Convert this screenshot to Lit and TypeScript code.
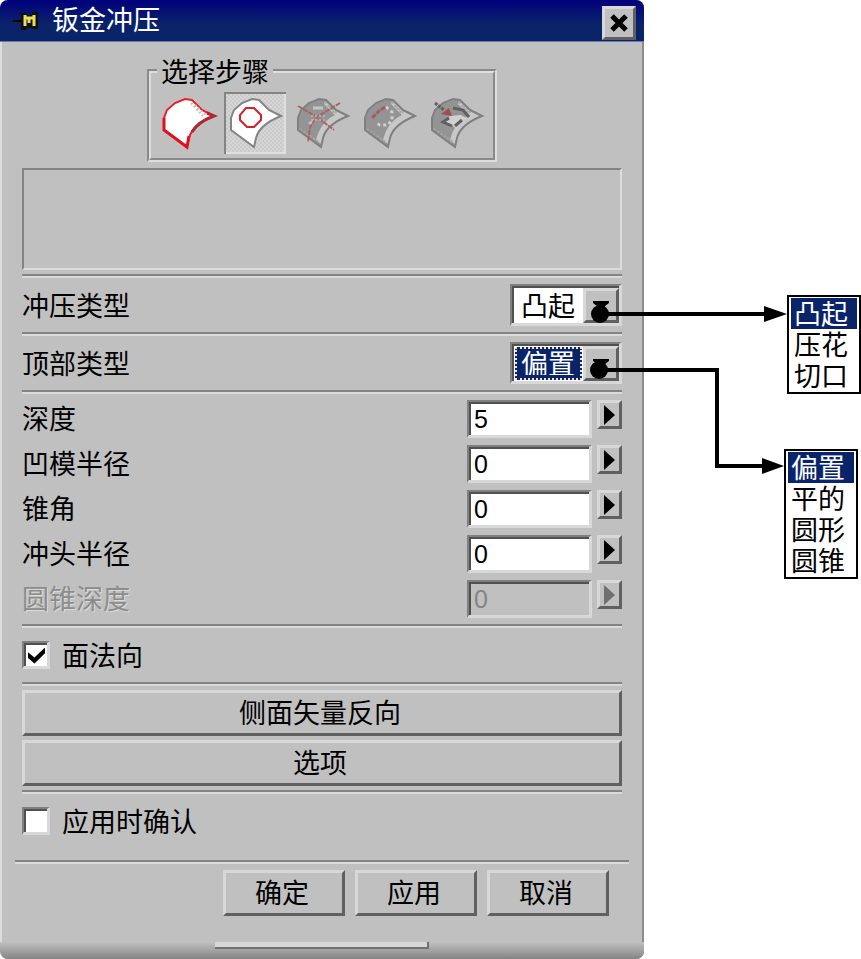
import { LitElement, html, css, svg, nothing } from "lit";
import { customElement } from "lit/decorators.js";
import { classMap } from "lit/directives/class-map.js";

const SHEET = "M7 26V38L30 55L32 46C34 38 42 30 57 24L45 18L35 8L28 7L18 11L10 18Z";

const disabledSheet = svg`
  <path d=${SHEET} fill="#949494"/>
  <path d="M34 9L45 19L55 24C42 29 33 38 30 52L25 48C28 36 34 28 44 23L33 12Z" fill="#c8c8c8"/>
  <path d="M34 10L44 22M38 14L47 22M9 37L28 50" stroke="#a8a8a8" stroke-width="2" stroke-dasharray="2 2" fill="none"/>
  <path d=${SHEET} fill="none" stroke="#808080" stroke-width="2"/>`;

const STEPS = [
  {
    label: "选择面",
    state: "ready",
    art: svg`
      <path d=${SHEET} fill="#fff" stroke="#e8202a" stroke-width="2"/>
      <path d="M34 11L46 24M38 13L49 23" stroke="#c4c0bc" stroke-width="2" stroke-dasharray="2 2"/>
      <path d="M7 26V38L30 55L32 44" fill="none" stroke="#e01020" stroke-width="3"/>
      <path d="M35 40C39 33 46 28 57 24L50 21" fill="none" stroke="#b02830" stroke-width="3"/>`,
  },
  {
    label: "选择曲线",
    state: "current",
    art: svg`
      <path d=${SHEET} fill="#fff" stroke="#848484" stroke-width="2"/>
      <path d="M22 16H30L37 23V28L30 35H23L16 28V23Z" fill="#fff" stroke="#d8202c" stroke-width="2"/>`,
  },
  {
    label: "第三步",
    state: "off",
    art: svg`${disabledSheet}
      <path d="M22 16H32M18 32L24 28" stroke="#c4c4c4" stroke-width="3"/>
      <path d="M7 14L26 25L43 38M49 11L26 25L19 35L17 50" fill="none" stroke="#a46468" stroke-width="2" stroke-dasharray="5 1"/>
      <path d="M20 24H34M20 28H34" stroke="#c0a8a8" stroke-width="2" stroke-dasharray="2 2"/>`,
  },
  {
    label: "第四步",
    state: "off",
    art: svg`${disabledSheet}
      <path d="M28 15L34 20V28L30 33H22L18 31" fill="none" stroke="#d0d0d0" stroke-width="3" stroke-dasharray="3 3"/>
      <path d="M27 15L21 19L14 26" fill="none" stroke="#a45c60" stroke-width="3" stroke-dasharray="5 1"/>`,
  },
  {
    label: "第五步",
    state: "off",
    art: svg`${disabledSheet}
      <path d="M19 30L25 24L36 23L41 26L36 32L31 37L26 32Z" fill="#d0d0d0"/>
      <path d="M28 16L38 18L44 25M24 26L18 30L27 34M30 34L37 28" fill="none" stroke="#606060" stroke-width="3"/>
      <path d="M10 11L19 18" stroke="#606060" stroke-width="3" stroke-dasharray="3 1"/>
      <path d="M16 22L27 24L24 16Z" fill="#a04c50"/>`,
  },
];

const PUNCH_TYPES = ["凸起", "压花", "切口"];
const TOP_TYPES = ["偏置", "平的", "圆形", "圆锥"];

const FIELDS = [
  { id: "depth", label: "深度", value: "5", disabled: false },
  { id: "die-radius", label: "凹模半径", value: "0", disabled: false },
  { id: "taper", label: "锥角", value: "0", disabled: false },
  { id: "punch-radius", label: "冲头半径", value: "0", disabled: false },
  { id: "cone-depth", label: "圆锥深度", value: "0", disabled: true },
];

@customElement("app-root")
export class AppRoot extends LitElement {
  static styles = css`
    :host {
      display: block;
      background: #fff;
      color: #000;
      font: 27px/28px "Noto Sans CJK SC", sans-serif;
    }
    * { box-sizing: border-box; }
    button, select, input { font: inherit; color: inherit; margin: 0; border-radius: 0; }
    svg { display: block; }

    .page {
      display: grid;
      grid-template-columns: minmax(0, 644fr) minmax(0, 217fr);
      align-items: start;
    }
    .dialog {
      background: #c0c0c0;
      border-radius: 8px;
      overflow: hidden;
      box-shadow: inset 2px 0 #dcdcdc, inset -2px 0 #8c8c8c;
    }
    .titlebar {
      display: flex;
      align-items: center;
      height: 42px;
      padding: 0 8px 0 12px;
      background: linear-gradient(#00007b, #0a246a 60%);
      border-bottom: 1px solid #6878a8;
      color: #fff;
    }
    .title { flex: 1; margin: 0 0 3px 12px; font-size: 27px; font-weight: 400; }
    .close { width: 34px; height: 34px; padding: 0; display: grid; place-items: center; margin-top: 4px; }
    .raised {
      background: #c0c0c0;
      border: 3px solid;
      border-color: #d8d8d8 #606060 #606060 #d8d8d8;
    }
    .sunken {
      border: solid;
      border-width: 2px 3px 3px 2px;
      border-color: #808080 #d8d8d8 #d8d8d8 #808080;
      box-shadow: inset 2px 2px #505050;
    }
    .body { padding: 15px 22px 0; }
    .steps {
      width: fit-content;
      margin: 0 auto;
      padding: 7px 6px 4px;
      border: 4px groove #dedede;
      min-width: 0;
    }
    .steps legend { padding: 0 4px; }
    .step-list { display: flex; gap: 5px; }
    .step { width: 62px; height: 62px; padding: 0; border: 0; background: none; }
    .step.current {
      background: repeating-conic-gradient(#cacaca 0 25%, #d6d6d6 0 50%) 0 0 / 4px 4px;
      box-shadow: inset 2px 2px #848484, inset -2px -2px #e0e0e0;
    }
    .message {
      height: 102px;
      margin: 6px 0 4px;
      border: 2px solid;
      border-color: #848484 #dcdcdc #dcdcdc #848484;
    }
    .rule {
      height: 4px;
      margin: 0;
      border: 0;
      border-top: 2px solid #848484;
      border-bottom: 2px solid #dadada;
    }
    .rule.wide { margin: 0 -7px; }
    .row { display: flex; align-items: center; justify-content: space-between; height: 54px; }
    .combo { display: flex; width: 112px; height: 42px; padding: 2px 0 0 2px; background: #fff; }
    .combo select {
      flex: 1;
      min-width: 0;
      appearance: none;
      border: 0;
      outline: 0;
      background: #fff;
      padding: 0 0 2px 7px;
    }
    .combo.active select {
      margin: 1px;
      padding: 0 0 3px 4px;
      border: 2px dotted #f0e8c4;
      background: #0a246a;
      color: #fff;
    }
    .drop { width: 36px; display: grid; place-items: center; }
    .fields { display: grid; gap: 7px; padding: 6px 0; }
    .field { display: flex; gap: 5px; height: 38px; align-items: flex-start; }
    .field label { flex: 1; line-height: 36px; }
    .field input {
      width: 125px;
      height: 38px;
      padding: 2px 5px 0;
      background: #fff;
      font: 25px/28px "Liberation Sans", sans-serif;
    }
    .field.off label { color: #8c8c8c; text-shadow: 1px 1px #dcdcdc; }
    .field.off input { background: #c0c0c0; color: #848484; }
    .more { width: 25px; height: 29px; padding: 0; display: grid; place-items: center; color: #000; }
    .more:disabled { color: #707070; }
    .check { display: flex; align-items: center; gap: 12px; height: 54px; }
    .check input {
      appearance: none;
      width: 28px;
      height: 28px;
      padding: 2px 0 0 2px;
      display: grid;
      place-items: center;
      background: #fff;
    }
    .check input:checked::before {
      content: "";
      width: 17px;
      height: 16px;
      background: #000;
      clip-path: polygon(0 30%, 38% 62%, 100% 0, 100% 36%, 38% 100%, 0 66%);
    }
    .check.last { margin-bottom: 12px; }
    .stack { display: grid; gap: 4px; padding: 4px 0; }
    .push { height: 46px; padding: 0 4px 3px 0; }
    .actions { display: flex; justify-content: flex-end; gap: 10px; padding: 6px 13px 26px 0; }
    .actions .push { width: 122px; }
    .foot {
      height: 17px;
      background: linear-gradient(#c0c0c0, #848484);
      display: flex;
      justify-content: center;
      align-items: flex-start;
    }
    .grip {
      width: 214px;
      height: 7px;
      background: #d8d8d8;
      border: solid #707070;
      border-width: 0 2px 2px 0;
    }
    .callouts {
      position: relative;
      display: flex;
      flex-direction: column;
      align-items: flex-end;
      gap: 55px;
      padding-top: 295px;
    }
    .menu {
      list-style: none;
      margin: 0;
      padding: 1px 2px;
      width: 74px;
      border: 2px solid #000;
      background: #fff;
      font-family: "Liberation Sans", "Noto Sans CJK SC", sans-serif;
    }
    .menu.inset { margin-right: 3px; }
    .menu li { height: 31px; padding: 3px 0 0 3px; white-space: nowrap; }
    .menu .chosen { background: #0a246a; color: #fff; }
    .links { position: absolute; top: 295px; left: -56px; pointer-events: none; }
  `;

  private rule(wide = false) {
    return html`<hr class=${classMap({ rule: true, wide })} />`;
  }

  private combo(id: string, label: string, options: string[], active = false) {
    return html`
      <div class="row">
        <label for=${id}>${label}</label>
        <div class=${classMap({ combo: true, sunken: true, active })}>
          <select id=${id}>${options.map((o) => html`<option>${o}</option>`)}</select>
          <span class="drop raised" aria-hidden="true">
            <svg width="16" height="10" viewBox="0 0 16 10"><path d="M0 0H16V2L12 5V10H4V5L0 2Z" /></svg>
          </span>
        </div>
      </div>`;
  }

  private menu(items: string[], inset = false) {
    return html`
      <ul class=${classMap({ menu: true, inset })}>
        ${items.map((t, i) => html`<li class=${i === 0 ? "chosen" : nothing}>${t}</li>`)}
      </ul>`;
  }

  render() {
    return html`
      <main class="page">
        <section class="dialog" aria-labelledby="title">
          <header class="titlebar">
            <svg width="28" height="20" viewBox="0 0 28 20" aria-hidden="true">
              <path d="M1 10H10" stroke="#000" stroke-width="2" />
              <path d="M9 2H14V4H20V1H26V18H20V17H14V19H9Z" fill="#101008" />
              <path d="M13 4V15M22 4V15" stroke="#e8e060" stroke-width="3" />
              <path d="M13 7H22M17 7V12" fill="none" stroke="#e8e060" stroke-width="3" />
            </svg>
            <h1 class="title" id="title">钣金冲压</h1>
            <button class="close raised" aria-label="关闭">
              <svg width="20" height="20" viewBox="0 0 20 20"><path d="M3 3L17 17M17 3L3 17" stroke="#000" stroke-width="5" /></svg>
            </button>
          </header>
          <div class="body">
            <fieldset class="steps">
              <legend>选择步骤</legend>
              <div class="step-list">
                ${STEPS.map((s) => html`
                  <button class=${classMap({ step: true, current: s.state === "current" })}
                    aria-label=${s.label} ?disabled=${s.state === "off"}>
                    <svg width="62" height="62" viewBox="0 0 62 62">${s.art}</svg>
                  </button>`)}
              </div>
            </fieldset>
            <div class="message" role="status"></div>
            ${this.rule()}
            ${this.combo("punch-type", "冲压类型", PUNCH_TYPES)}
            ${this.rule()}
            ${this.combo("top-type", "顶部类型", TOP_TYPES, true)}
            ${this.rule()}
            <div class="fields">
              ${FIELDS.map((f) => html`
                <div class=${classMap({ field: true, off: f.disabled })}>
                  <label for=${f.id}>${f.label}</label>
                  <input class="sunken" id=${f.id} type="text" .value=${f.value} ?disabled=${f.disabled} />
                  <button class="more raised" aria-label="${f.label}选项" ?disabled=${f.disabled}>
                    <svg width="11" height="20" viewBox="0 0 11 20"><path d="M0 0L11 10L0 20Z" fill="currentColor" /></svg>
                  </button>
                </div>`)}
            </div>
            ${this.rule()}
            <div class="check">
              <input class="sunken" type="checkbox" id="normal" checked />
              <label for="normal">面法向</label>
            </div>
            ${this.rule()}
            <div class="stack">
              <button class="push raised">侧面矢量反向</button>
              <button class="push raised">选项</button>
            </div>
            ${this.rule()}
            <div class="check last">
              <input class="sunken" type="checkbox" id="confirm" />
              <label for="confirm">应用时确认</label>
            </div>
            ${this.rule(true)}
            <div class="actions">
              <button class="push raised">确定</button>
              <button class="push raised">应用</button>
              <button class="push raised">取消</button>
            </div>
          </div>
          <footer class="foot"><div class="grip"></div></footer>
        </section>
        <aside class="callouts">
          ${this.menu(PUNCH_TYPES)}
          ${this.menu(TOP_TYPES, true)}
          <svg class="links" width="200" height="184" viewBox="0 0 200 184" aria-hidden="true">
            <circle cx="12" cy="19" r="9" />
            <path d="M12 19H180" stroke="#000" stroke-width="4" />
            <path d="M176 11L199 19L176 27Z" />
            <circle cx="11" cy="75" r="9" />
            <path d="M11 75H129V171H176" fill="none" stroke="#000" stroke-width="4" />
            <path d="M174 163L196 171L174 179Z" />
          </svg>
        </aside>
      </main>`;
  }
}
